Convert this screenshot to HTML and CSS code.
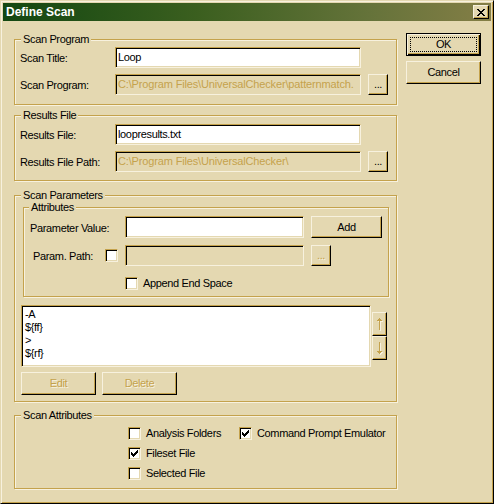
FILE: index.html
```html
<!DOCTYPE html>
<html>
<head>
<meta charset="utf-8">
<title>Define Scan</title>
<link rel="stylesheet" href="styles.css">
</head>
<body>
<div class="window">
  <div class="titlebar">
    <span class="title">Define Scan</span>
    <span class="btn close-btn">
      <svg width="8" height="7" viewBox="0 0 8 7"><path d="M0 0h2v1h-2z M6 0h2v1h-2z M1 1h2v1h-2z M5 1h2v1h-2z M2 2h4v1h-4z M3 3h2v1h-2z M2 4h4v1h-4z M1 5h2v1h-2z M5 5h2v1h-2z M0 6h2v1h-2z M6 6h2v1h-2z" fill="#000"/></svg>
    </span>
  </div>
  <div class="body">
    <div class="main">
      <fieldset class="group g-program">
        <legend>Scan Program</legend>
        <div class="group-body">
          <div class="row">
            <span class="label">Scan Title:</span>
            <div class="edit">Loop</div>
          </div>
          <div class="row row-gap">
            <span class="label">Scan Program:</span>
            <div class="edit disabled">C:\Program Files\UniversalChecker\patternmatch.</div>
            <span class="btn dots">...</span>
          </div>
        </div>
      </fieldset>

      <fieldset class="group g-results">
        <legend>Results File</legend>
        <div class="group-body">
          <div class="row">
            <span class="label">Results File:</span>
            <div class="edit">loopresults.txt</div>
          </div>
          <div class="row row-gap">
            <span class="label">Results File Path:</span>
            <div class="edit disabled">C:\Program Files\UniversalChecker\</div>
            <span class="btn dots">...</span>
          </div>
        </div>
      </fieldset>

      <fieldset class="group g-params">
        <legend>Scan Parameters</legend>
        <fieldset class="group g-attrs">
          <legend>Attributes</legend>
          <div class="attrs-body">
            <div class="row">
              <span class="label">Parameter Value:</span>
              <div class="edit edit-short edit-tall"></div>
              <span class="btn add-btn">Add</span>
            </div>
            <div class="row row-gap2">
              <span class="label label-check">
                <span>Param. Path:</span>
                <span class="checkbox"></span>
              </span>
              <div class="edit edit-short disabled"></div>
              <span class="btn dots btn-disabled">...</span>
            </div>
            <div class="row row-append">
              <span class="check-item">
                <span class="checkbox"></span>
                <span>Append End Space</span>
              </span>
            </div>
          </div>
        </fieldset>

        <div class="list-area">
          <div class="list">
            <div class="list-item">-A</div>
            <div class="list-item">${ff}</div>
            <div class="list-item">&gt;</div>
            <div class="list-item">${rf}</div>
          </div>
          <div class="arrows">
            <span class="btn arrow-btn">
              <svg width="6" height="13" viewBox="0 0 6 13">
                <g transform="translate(1 1)" fill="#F7F1DE"><path d="M2 0h1v1h-1z M1 1h3v1h-3z M0 2h5v1h-5z M2 3h1v9h-1z"/></g>
                <path fill="#C4A24C" d="M2 0h1v1h-1z M1 1h3v1h-3z M0 2h5v1h-5z M2 3h1v9h-1z"/>
              </svg>
            </span>
            <span class="btn arrow-btn">
              <svg width="6" height="13" viewBox="0 0 6 13">
                <g transform="translate(1 1)" fill="#F7F1DE"><path d="M2 0h1v9h-1z M0 9h5v1h-5z M1 10h3v1h-3z M2 11h1v1h-1z"/></g>
                <path fill="#C4A24C" d="M2 0h1v9h-1z M0 9h5v1h-5z M1 10h3v1h-3z M2 11h1v1h-1z"/>
              </svg>
            </span>
          </div>
        </div>

        <div class="edit-row">
          <span class="btn wide-btn btn-disabled">Edit</span>
          <span class="btn wide-btn btn-disabled">Delete</span>
        </div>
      </fieldset>

      <fieldset class="group g-scanattrs">
        <legend>Scan Attributes</legend>
        <div class="check-grid">
          <span class="check-item">
            <span class="checkbox"></span>
            <span>Analysis Folders</span>
          </span>
          <span class="check-item">
            <span class="checkbox checked"><svg width="7" height="7" viewBox="0 0 7 7"><path fill="#000" d="M6 0h1v1h-1z M5 1h2v1h-2z M0 2h1v1h-1z M4 2h3v1h-3z M0 3h2v1h-2z M3 3h3v1h-3z M0 4h5v1h-5z M1 5h3v1h-3z M2 6h1v1h-1z"/></svg></span>
            <span>Command Prompt Emulator</span>
          </span>
          <span class="check-item">
            <span class="checkbox checked"><svg width="7" height="7" viewBox="0 0 7 7"><path fill="#000" d="M6 0h1v1h-1z M5 1h2v1h-2z M0 2h1v1h-1z M4 2h3v1h-3z M0 3h2v1h-2z M3 3h3v1h-3z M0 4h5v1h-5z M1 5h3v1h-3z M2 6h1v1h-1z"/></svg></span>
            <span>Fileset File</span>
          </span>
          <span></span>
          <span class="check-item">
            <span class="checkbox"></span>
            <span>Selected File</span>
          </span>
        </div>
      </fieldset>
    </div>

    <div class="side">
      <span class="btn cmd-btn default-btn">OK</span>
      <span class="btn cmd-btn">Cancel</span>
    </div>
  </div>
</div>
</body>
</html>
```

FILE: styles.css
```css
html, body {
  margin: 0;
  padding: 0;
  background: #E4D8B1;
}

.window {
  width: 494px;
  height: 504px;
  box-sizing: border-box;
  background: #E4D8B1;
  border: 1px solid;
  border-color: #E4D8B1 #000 #000 #E4D8B1;
  box-shadow: inset 1px 1px 0 #F7F1DE, inset -1px -1px 0 #C4A24C;
  padding: 2px;
  font-family: "Liberation Sans", Arial, sans-serif;
  font-size: 11px;
  letter-spacing: -0.35px;
  color: #000;
}

.titlebar {
  height: 18px;
  display: flex;
  align-items: center;
  justify-content: space-between;
  background: linear-gradient(90deg, #134711 0%, #3b5f1f 40%, #65733a 75%, #847e46 100%);
  padding-left: 3px;
}

.title {
  color: #fff;
  font-weight: bold;
  font-size: 12px;
  letter-spacing: 0;
  line-height: 14px;
}

.btn {
  box-sizing: border-box;
  display: flex;
  align-items: center;
  justify-content: center;
  background: #E4D8B1;
  border: 1px solid;
  border-color: #F7F1DE #000 #000 #F7F1DE;
  box-shadow: inset -1px -1px 0 #C4A24C;
  line-height: 13px;
  white-space: nowrap;
}

.close-btn {
  width: 16px;
  height: 14px;
  margin-right: 2px;
}

.close-btn svg {
  display: block;
}

.body {
  display: flex;
  gap: 9px;
  padding: 12px 10px 0 11px;
}

.main {
  width: 383px;
  display: flex;
  flex-direction: column;
}

.side {
  display: flex;
  flex-direction: column;
  gap: 5px;
}

.cmd-btn {
  width: 75px;
  height: 23px;
}

.default-btn {
  border-color: #000;
  box-shadow: inset 1px 1px 0 #F7F1DE, inset -1px -1px 0 #000, inset -2px -2px 0 #C4A24C;
  outline: 1px dotted #000;
  outline-offset: -5px;
}

.group {
  margin: 0;
  padding: 0;
  min-width: 0;
  box-sizing: border-box;
  border: 1px solid #C4A24C;
  box-shadow: inset 1px 1px 0 #F7F1DE, 1px 1px 0 #F7F1DE;
}

.group > legend {
  margin-left: 6px;
  padding: 0 2px;
  line-height: 13px;
  background: #E4D8B1;
}

.group-body {
  padding-left: 5px;
}

.g-program {
  width: 383px;
  padding-top: 1px;
  padding-bottom: 9px;
}

.g-results {
  width: 383px;
  margin-top: 4px;
  padding-top: 2px;
  padding-bottom: 8px;
}

.g-params {
  width: 383px;
  margin-top: 8px;
  padding-bottom: 6px;
}

.g-attrs {
  width: 366px;
  margin: -1px 0 0 8px;
  padding-top: 2px;
  padding-bottom: 6px;
}

.g-attrs > legend {
  margin-left: 5px;
}

.attrs-body {
  padding-left: 6px;
}

.g-scanattrs {
  width: 383px;
  margin-top: 7px;
  padding-top: 5px;
  padding-bottom: 8px;
}

.row {
  display: flex;
  align-items: center;
}

.row-gap {
  margin-top: 6px;
}

.row-gap2 {
  margin-top: 7px;
}

.label {
  width: 95px;
  flex: none;
  padding-top: 2px;
  line-height: 13px;
  white-space: nowrap;
}

.label-check {
  box-sizing: border-box;
  display: flex;
  align-items: center;
  justify-content: space-between;
  padding-left: 3px;
  padding-right: 7px;
}

.label-check .checkbox {
  margin-top: -2px;
}

.edit {
  box-sizing: border-box;
  width: 246px;
  height: 21px;
  flex: none;
  background: #fff;
  border: 1px solid;
  border-color: #C4A24C #F7F1DE #F7F1DE #C4A24C;
  box-shadow: inset 1px 1px 0 #000, inset -1px -1px 0 #E4D8B1;
  padding: 3px 2px 0 2px;
  line-height: 13px;
  white-space: nowrap;
  overflow: hidden;
}

.edit.disabled {
  background: #E4D8B1;
  color: #C4A24C;
  letter-spacing: -0.15px;
}

.edit-short {
  width: 179px;
}

.edit-tall {
  height: 22px;
}

.dots {
  width: 20px;
  height: 21px;
  margin-left: 7px;
  padding-bottom: 1px;
}

.add-btn {
  width: 71px;
  height: 22px;
  margin-left: 7px;
}

.btn-disabled {
  color: #C4A24C;
  text-shadow: 1px 1px 0 #F7F1DE;
}

.row-append {
  margin-top: 11px;
  margin-left: 95px;
  height: 13px;
}

.checkbox {
  box-sizing: border-box;
  width: 13px;
  height: 13px;
  flex: none;
  background: #fff;
  border: 1px solid;
  border-color: #C4A24C #F7F1DE #F7F1DE #C4A24C;
  box-shadow: inset 1px 1px 0 #000, inset -1px -1px 0 #E4D8B1;
  padding: 2px;
}

.checkbox svg {
  display: block;
}

.check-item {
  display: flex;
  align-items: center;
  gap: 5px;
  height: 13px;
  line-height: 13px;
  white-space: nowrap;
}

.check-grid {
  display: grid;
  grid-template-columns: 111px auto;
  row-gap: 7px;
  margin-left: 113px;
}

.list-area {
  display: flex;
  margin: 8px 0 0 6px;
  gap: 1px;
}

.list {
  box-sizing: border-box;
  width: 350px;
  height: 62px;
  background: #fff;
  border: 1px solid;
  border-color: #C4A24C #F7F1DE #F7F1DE #C4A24C;
  box-shadow: inset 1px 1px 0 #000, inset -1px -1px 0 #E4D8B1;
  padding: 2px 3px;
}

.list-item {
  line-height: 13px;
  white-space: nowrap;
}

.arrows {
  display: flex;
  flex-direction: column;
  padding-top: 7px;
}

.arrow-btn {
  width: 15px;
  height: 24px;
}

.arrow-btn svg {
  display: block;
}

.edit-row {
  display: flex;
  gap: 6px;
  margin: 5px 0 0 6px;
}

.wide-btn {
  width: 75px;
  height: 23px;
}
```
